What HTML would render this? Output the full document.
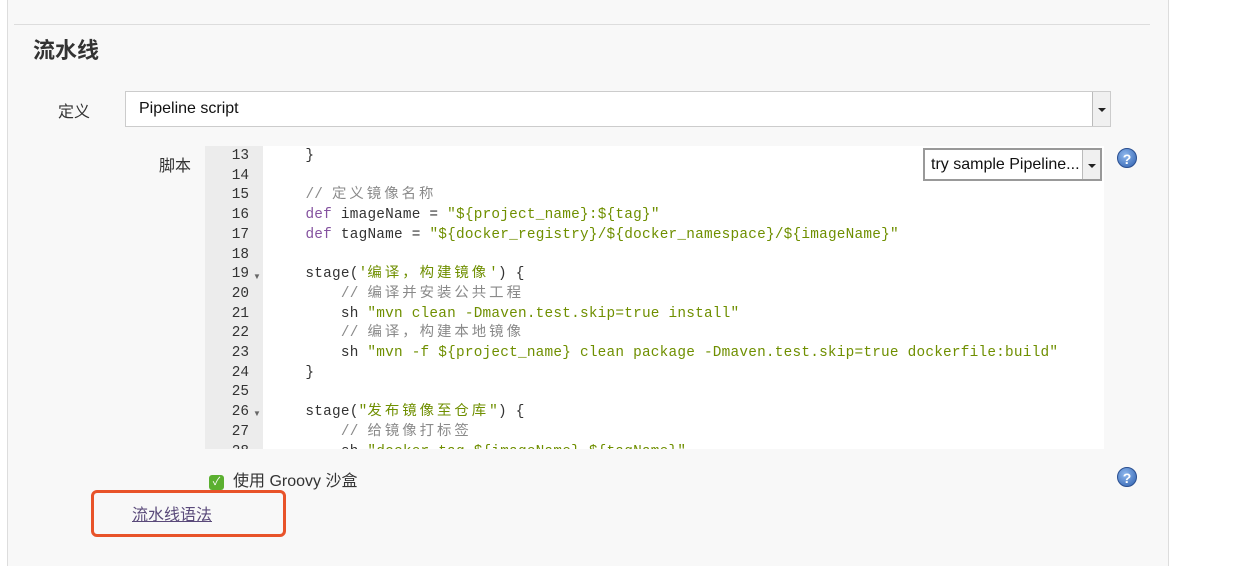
<!DOCTYPE html>
<html><head><meta charset="utf-8"><style>
*{margin:0;padding:0;box-sizing:border-box}
body{width:1240px;height:566px;background:#fff;position:relative;overflow:hidden;font-family:"Liberation Sans","Noto Sans CJK SC",sans-serif;color:#333}
.panel{position:absolute;left:7px;top:0;width:1162px;height:566px;background:#f8f8f8;border-left:1px solid #ddd;border-right:1px solid #ddd}
.hr{position:absolute;left:14px;top:24px;width:1136px;height:1px;background:#ddd}
h1{position:absolute;left:33px;top:33px;font-size:22px;font-weight:bold;color:#333}
.lbl{position:absolute;font-size:16px;color:#333}
.sel{position:absolute;left:125px;top:91px;width:986px;height:36px;background:#fff;border:1px solid #ccc;font-size:16px;padding:8px 13px;color:#111}
.arr{position:absolute;right:0;top:0;width:18px;height:100%;background:#f0f0f0;border-left:1px solid #bbb}
.arr:after{content:"";position:absolute;left:5px;top:50%;margin-top:-1px;border:4px solid transparent;border-top:4px solid #222;border-bottom:0}
.gut{position:absolute;left:205px;top:146px;width:58px;height:303px;background:#ececec;overflow:hidden}
.code{position:absolute;left:263px;top:146px;width:841px;height:303px;background:#fff;overflow:hidden}
.ln,.cl{font-family:"Liberation Mono","Noto Sans CJK SC",monospace;font-size:14.4px;line-height:19.7px;white-space:pre}
.ln{text-align:right;padding-right:14px;color:#333;margin-top:1px}
.cl{padding-left:7px;color:#333;margin-top:1px;letter-spacing:0.22px}
.cl i{font-style:normal;letter-spacing:3px}
.c{color:#8a8a8a}.s{color:#6f8f00}.k{color:#8553a0}
.fold{font-size:8px;color:#666;position:absolute;left:48px}
.try{position:absolute;left:923px;top:148px;width:179px;height:33px;background:#fff;border:2px solid #999;font-size:16px;padding:6px 6px;color:#111}
.help{position:absolute;width:20px;height:20px;border-radius:50%;background:radial-gradient(circle at 40% 35%,#8fb8ee,#2d5fae);color:#fff;font-weight:bold;font-size:14px;text-align:center;line-height:20px;border:1px solid #2a4f90}
.cb{position:absolute;left:209px;top:475px;width:15px;height:15px;background:#5bb030;border-radius:3px;color:#fff;font-size:11px;text-align:center;line-height:15px}
.red{position:absolute;left:91px;top:490px;width:195px;height:47px;border:3px solid #e8532a;border-radius:6px}
a{position:absolute;left:132px;top:501px;font-size:16px;color:#5a4a7a;text-decoration:underline}
</style></head><body>
<div class="panel"></div>
<div class="hr"></div>
<h1>流水线</h1>
<div class="lbl" style="left:58px;top:98px">定义</div>
<div class="sel">Pipeline script<div class="arr"></div></div>
<div class="lbl" style="left:159px;top:152px">脚本</div>
<div class="gut"><div class="ln">13
14
15
16
17
18
19
20
21
22
23
24
25
26
27
28</div><span class="fold" style="top:126px">▼</span><span class="fold" style="top:263px">▼</span></div>
<div class="code"><div class="cl">    }

    <span class="c">// <i>定义镜像名称</i></span>
    <span class="k">def</span> imageName = <span class="s">"${project_name}:${tag}"</span>
    <span class="k">def</span> tagName = <span class="s">"${docker_registry}/${docker_namespace}/${imageName}"</span>

    stage(<span class="s">'<i>编译，构建镜像</i>'</span>) {
        <span class="c">// <i>编译并安装公共工程</i></span>
        sh <span class="s">"mvn clean -Dmaven.test.skip=true install"</span>
        <span class="c">// <i>编译，构建本地镜像</i></span>
        sh <span class="s">"mvn -f ${project_name} clean package -Dmaven.test.skip=true dockerfile:build"</span>
    }

    stage(<span class="s">"<i>发布镜像至仓库</i>"</span>) {
        <span class="c">// <i>给镜像打标签</i></span>
        sh <span class="s">"docker tag ${imageName} ${tagName}"</span></div></div>
<div class="try">try sample Pipeline...<div class="arr"></div></div>
<div class="help" style="left:1117px;top:148px">?</div>
<div class="help" style="left:1117px;top:467px">?</div>
<div class="cb">✓</div>
<div class="lbl" style="left:233px;top:467px">使用 Groovy 沙盒</div>
<div class="red"></div>
<a>流水线语法</a>
</body></html>
